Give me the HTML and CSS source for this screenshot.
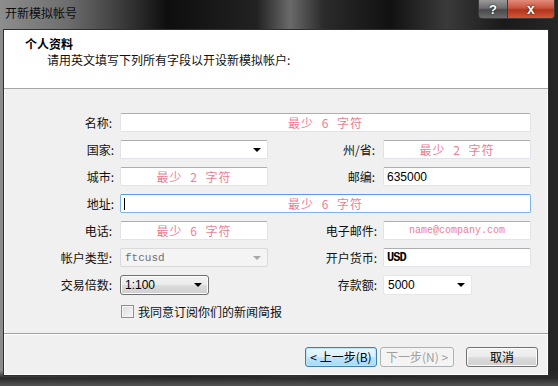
FILE: index.html
```html
<!DOCTYPE html>
<html lang="zh-CN">
<head>
    <meta charset="UTF-8">
    <title>开新模拟帐号</title>
    <link rel="stylesheet" href="styles.css">
</head>
<body>
    <div class="window">
        <div class="titlebar">
            <span class="title">开新模拟帐号</span>
            <div class="caption-buttons">
                <div class="cap-btn cap-help">?</div>
                <div class="cap-btn cap-close">x</div>
            </div>
        </div>

        <div class="client">
            <div class="header">
                <div class="header-title">个人资料</div>
                <div class="header-sub">请用英文填写下列所有字段以开设新模拟帐户:</div>
            </div>

            <div class="form-area">
                <div class="form-grid">
                    <label class="lbl">名称:</label>
                    <div class="field span3 hint">最少 6 字符</div>

                    <label class="lbl">国家:</label>
                    <div class="field combo"><span class="arrow"></span></div>
                    <label class="lbl">州/省:</label>
                    <div class="field hint">最少 2 字符</div>

                    <label class="lbl">城市:</label>
                    <div class="field hint">最少 2 字符</div>
                    <label class="lbl">邮编:</label>
                    <div class="field value">635000</div>

                    <label class="lbl">地址:</label>
                    <div class="field span3 hint focused"><span class="caret"></span>最少 6 字符</div>

                    <label class="lbl">电话:</label>
                    <div class="field hint">最少 6 字符</div>
                    <label class="lbl">电子邮件:</label>
                    <div class="field hint mono">name@company.com</div>

                    <label class="lbl">帐户类型:</label>
                    <div class="field combo disabled"><span class="mono">ftcusd</span><span class="arrow"></span></div>
                    <label class="lbl">开户货币:</label>
                    <div class="field value usd">USD</div>

                    <label class="lbl">交易倍数:</label>
                    <div class="leverage-cell">
                        <div class="field combo dropbtn">1:100<span class="arrow"></span></div>
                    </div>
                    <label class="lbl">存款额:</label>
                    <div class="leverage-cell">
                        <div class="field combo deposit">5000<span class="arrow"></span></div>
                    </div>

                    <div></div>
                    <div class="check-row span3">
                        <span class="checkbox"></span>
                        <span>我同意订阅你们的新闻简报</span>
                    </div>
                </div>
            </div>

            <div class="footer">
                <button class="btn btn-default">&lt; 上一步(B)</button>
                <button class="btn btn-disabled">下一步(N) &gt;</button>
                <button class="btn btn-cancel">取消</button>
            </div>
        </div>
    </div>
</body>
</html>
```

FILE: styles.css
```css
* {
    box-sizing: border-box;
    margin: 0;
    padding: 0;
}

body {
    width: 558px;
    height: 386px;
    overflow: hidden;
    font-family: "Noto Sans CJK SC", "Liberation Sans", sans-serif;
    font-size: 12px;
    color: #111;
    background: #1a1a1a;
}

.window {
    width: 558px;
    height: 386px;
    display: flex;
    flex-direction: column;
    padding: 0 9px 10px 3px;
    background:
        linear-gradient(180deg, rgba(0, 0, 0, 0) 0, rgba(0, 0, 0, 0) 370px, #2a2a2a 378px, #555 386px),
        linear-gradient(90deg, #8d8d8d 0, #6e6e6e 12%, #3a3a3a 22%, #0e0e0e 30%, #222 46%, #6a6a6a 52%, #2b2b2b 58%, #111 70%, #3a3a3a 80%, #1a1a1a 90%, #262626 100%);
}

.titlebar {
    height: 29px;
    display: flex;
    justify-content: space-between;
    align-items: flex-start;
    padding-left: 2px;
}

.title {
    margin-top: 4px;
    color: #0c0c0c;
    font-size: 12px;
}

.caption-buttons {
    display: flex;
    margin-right: -6px;
}

.cap-btn {
    height: 19px;
    display: flex;
    justify-content: center;
    align-items: center;
    color: #fff;
    font-family: "Liberation Sans", sans-serif;
    font-weight: bold;
    font-size: 13px;
    border: 1px solid #3a3a3a;
    border-top: none;
    text-shadow: 0 0 2px #000;
}

.cap-help {
    width: 29px;
    border-radius: 0 0 0 4px;
    background: linear-gradient(180deg, #9a9a9a 0, #6d6d6d 45%, #4a4a4a 55%, #6a6a6a 100%);
    border-right: none;
}

.cap-close {
    width: 48px;
    border-radius: 0 0 4px 0;
    font-size: 14px;
    background: linear-gradient(180deg, #e38b7a 0, #c8533c 45%, #b2341d 55%, #d0583a 100%);
}

.client {
    flex: 1;
    display: flex;
    flex-direction: column;
    background: #f0f0f0;
    border: 1px solid #2f2f2f;
    box-shadow: inset 0 0 0 1px #fff;
}

.header {
    height: 59px;
    background: #fff;
    border-bottom: 1px solid #a6a6a6;
    padding: 6px 0 0 21px;
    line-height: 16px;
}

.header-title {
    font-weight: bold;
    color: #000;
}

.header-sub {
    padding-left: 22px;
    color: #111;
}

.form-area {
    flex: 1;
    padding: 24px 0 0 44px;
    border-bottom: 1px solid #a0a0a0;
}

.form-grid {
    display: grid;
    grid-template-columns: 72px 148px 115px 148px;
    grid-auto-rows: 19px;
    row-gap: 8px;
}

.lbl {
    display: flex;
    justify-content: flex-end;
    align-items: center;
    padding-right: 8px;
    color: #111;
    white-space: nowrap;
}

.lbl:nth-child(4n+3) {
    padding-right: 6px;
}

.span3 {
    grid-column: span 3;
}

.field {
    position: relative;
    height: 19px;
    display: flex;
    align-items: center;
    padding: 0 4px;
    background: #fff;
    border: 1px solid #e2e3ea;
    border-top-color: #abadb3;
    border-radius: 2px;
    white-space: nowrap;
}

.hint {
    justify-content: center;
    color: #ef7d93;
    letter-spacing: 1px;
    word-spacing: 4px;
}

.mono {
    font-family: "Liberation Mono", monospace;
    font-size: 10px;
    letter-spacing: 0;
    word-spacing: 0;
}

.value {
    font-family: "Liberation Sans", sans-serif;
    font-size: 12px;
    color: #000;
    padding-left: 3px;
}

.usd {
    font-family: "Liberation Mono", monospace;
    font-weight: bold;
    font-size: 12px;
    letter-spacing: -1px;
}

.focused {
    border-color: #7eb4ea;
    border-top-color: #569de5;
}

.caret {
    position: absolute;
    left: 3px;
    top: 3px;
    width: 1px;
    height: 12px;
    background: #000;
}

.combo {
    font-family: "Liberation Sans", sans-serif;
    color: #000;
}

.arrow {
    position: absolute;
    right: 6px;
    top: 7px;
    width: 0;
    height: 0;
    border-left: 4px solid transparent;
    border-right: 4px solid transparent;
    border-top: 4px solid #000;
}

.disabled {
    background: #f4f4f4;
    border-color: #d9d9d9;
    color: #8a8a8a;
}

.disabled .mono {
    color: #707070;
    font-size: 11px;
}

.disabled .arrow {
    border-top-color: #a8a8a8;
}

.leverage-cell {
    display: flex;
}

.dropbtn {
    width: 89px;
    height: 20px;
    border: 1px solid #707070;
    border-radius: 3px;
    background: linear-gradient(180deg, #f2f2f2 0, #ebebeb 50%, #dddddd 51%, #cfcfcf 100%);
    box-shadow: inset 0 0 0 1px #fcfcfc;
}

.deposit {
    width: 89px;
    height: 20px;
    border-color: #e6e6e6;
}

.check-row {
    display: flex;
    align-items: center;
    gap: 4px;
    padding-left: 1px;
    color: #111;
}

.checkbox {
    width: 13px;
    height: 13px;
    border: 1px solid #8e8f8f;
    background: linear-gradient(135deg, #dcdcdc 0, #f6f6f6 100%);
    box-shadow: inset 0 0 0 1px #f4f4f4;
}

.footer {
    height: 41px;
    display: flex;
    align-items: flex-start;
    padding: 12px 10px 0 0;
    justify-content: flex-end;
    border-top: 1px solid #fff;
}

.btn {
    height: 20px;
    font-family: "Noto Sans CJK SC", sans-serif;
    font-size: 12px;
    border-radius: 3px;
    border: 1px solid #707070;
    background: linear-gradient(180deg, #f2f2f2 0, #ebebeb 50%, #dddddd 51%, #cfcfcf 100%);
    color: #000;
    box-shadow: inset 0 0 0 1px #fcfcfc;
    line-height: 16px;
}

.btn-default {
    width: 72px;
    border-color: #3c7fb1;
    background: linear-gradient(180deg, #eaf6fd 0, #d9f0fc 50%, #bee6fd 51%, #a7d9f5 100%);
    box-shadow: inset 0 0 0 1px #bfe4f8;
}

.btn-disabled {
    width: 74px;
    margin-left: 3px;
    color: #a0a0a0;
    border-color: #adb2b5;
    background: #f4f4f4;
    box-shadow: none;
}

.btn-cancel {
    width: 72px;
    margin-left: 12px;
}
```
